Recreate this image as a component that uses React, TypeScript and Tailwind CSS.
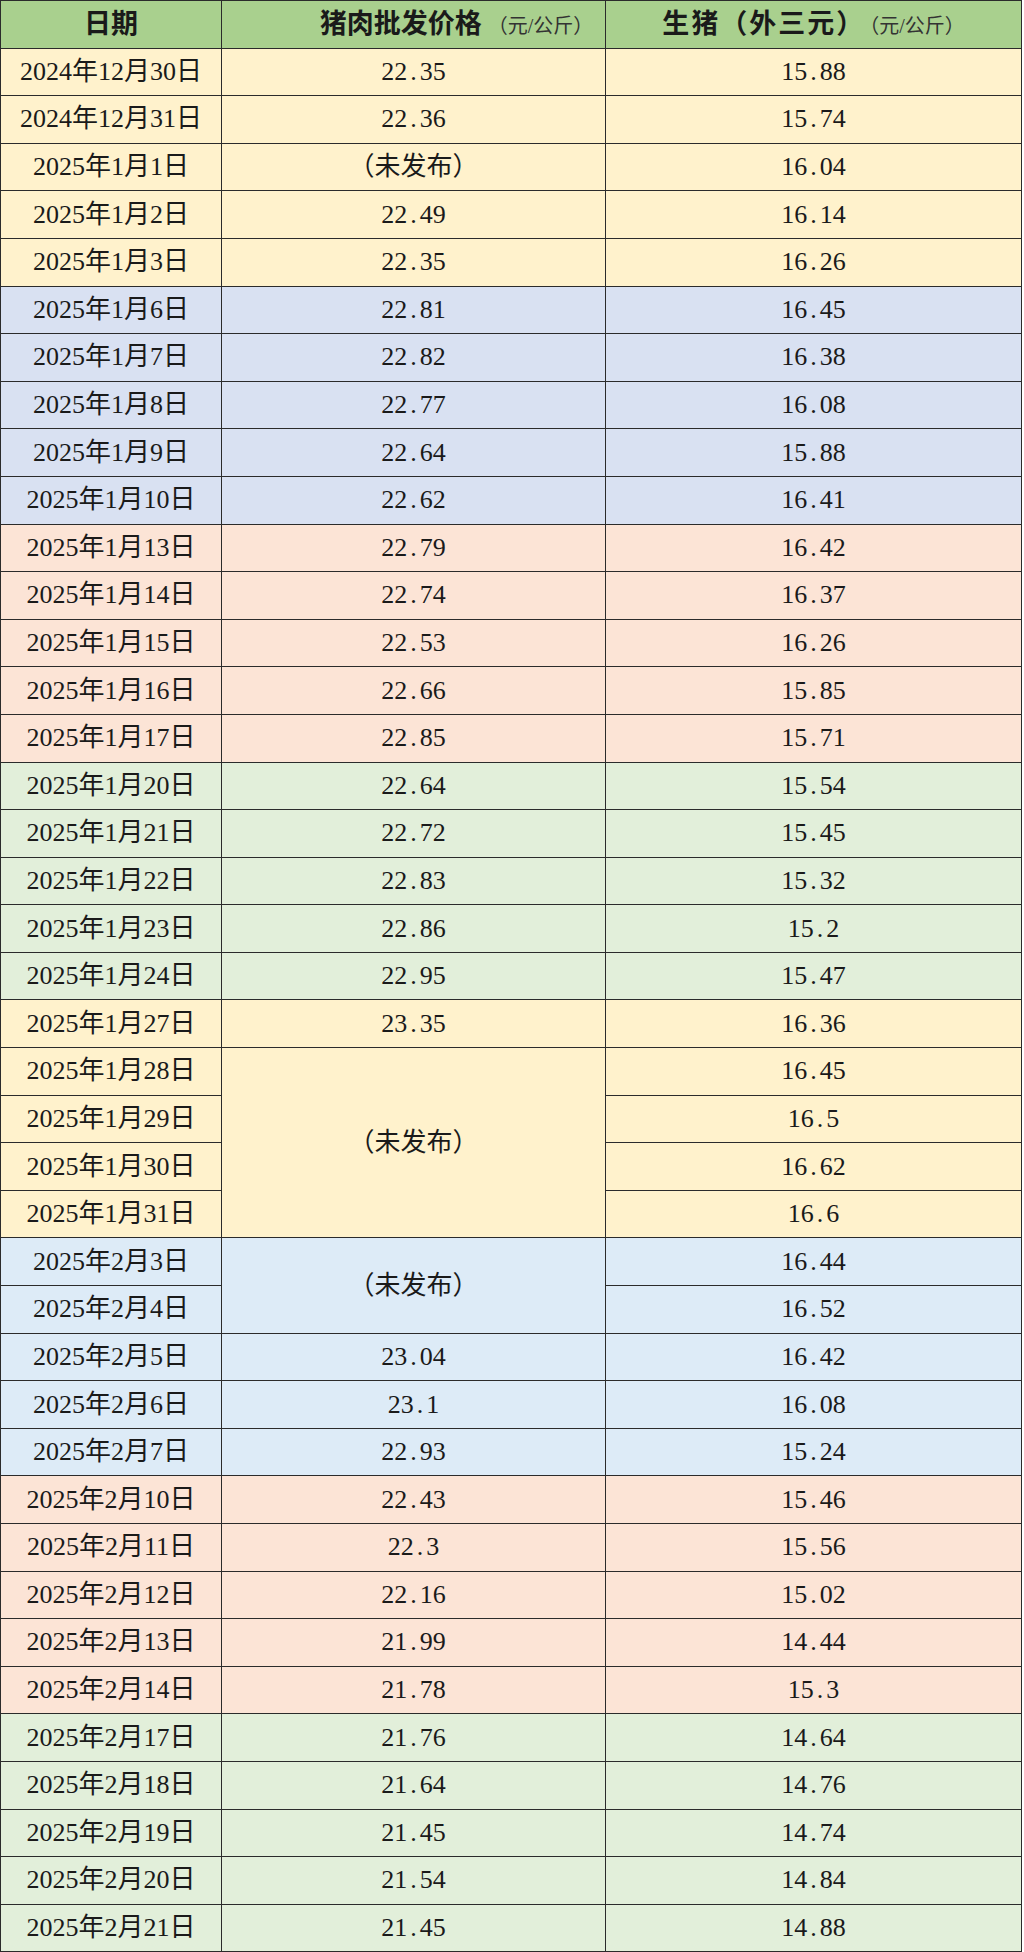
import React from 'react';

// --- Data ---
type Row = { date: string; pork: string | null; live: string; span?: number };
type Group = { bg: string; rows: Row[] };

const NA = '（未发布）';

const groups: Group[] = [
  {
    bg: 'bg-[#fff2cc]',
    rows: [
      { date: '2024年12月30日', pork: '22.35', live: '15.88' },
      { date: '2024年12月31日', pork: '22.36', live: '15.74' },
      { date: '2025年1月1日', pork: NA, live: '16.04' },
      { date: '2025年1月2日', pork: '22.49', live: '16.14' },
      { date: '2025年1月3日', pork: '22.35', live: '16.26' },
    ],
  },
  {
    bg: 'bg-[#d9e1f2]',
    rows: [
      { date: '2025年1月6日', pork: '22.81', live: '16.45' },
      { date: '2025年1月7日', pork: '22.82', live: '16.38' },
      { date: '2025年1月8日', pork: '22.77', live: '16.08' },
      { date: '2025年1月9日', pork: '22.64', live: '15.88' },
      { date: '2025年1月10日', pork: '22.62', live: '16.41' },
    ],
  },
  {
    bg: 'bg-[#fce4d6]',
    rows: [
      { date: '2025年1月13日', pork: '22.79', live: '16.42' },
      { date: '2025年1月14日', pork: '22.74', live: '16.37' },
      { date: '2025年1月15日', pork: '22.53', live: '16.26' },
      { date: '2025年1月16日', pork: '22.66', live: '15.85' },
      { date: '2025年1月17日', pork: '22.85', live: '15.71' },
    ],
  },
  {
    bg: 'bg-[#e2efda]',
    rows: [
      { date: '2025年1月20日', pork: '22.64', live: '15.54' },
      { date: '2025年1月21日', pork: '22.72', live: '15.45' },
      { date: '2025年1月22日', pork: '22.83', live: '15.32' },
      { date: '2025年1月23日', pork: '22.86', live: '15.2' },
      { date: '2025年1月24日', pork: '22.95', live: '15.47' },
    ],
  },
  {
    bg: 'bg-[#fff2cc]',
    rows: [
      { date: '2025年1月27日', pork: '23.35', live: '16.36' },
      { date: '2025年1月28日', pork: NA, live: '16.45', span: 4 },
      { date: '2025年1月29日', pork: null, live: '16.5' },
      { date: '2025年1月30日', pork: null, live: '16.62' },
      { date: '2025年1月31日', pork: null, live: '16.6' },
    ],
  },
  {
    bg: 'bg-[#ddebf7]',
    rows: [
      { date: '2025年2月3日', pork: NA, live: '16.44', span: 2 },
      { date: '2025年2月4日', pork: null, live: '16.52' },
      { date: '2025年2月5日', pork: '23.04', live: '16.42' },
      { date: '2025年2月6日', pork: '23.1', live: '16.08' },
      { date: '2025年2月7日', pork: '22.93', live: '15.24' },
    ],
  },
  {
    bg: 'bg-[#fce4d6]',
    rows: [
      { date: '2025年2月10日', pork: '22.43', live: '15.46' },
      { date: '2025年2月11日', pork: '22.3', live: '15.56' },
      { date: '2025年2月12日', pork: '22.16', live: '15.02' },
      { date: '2025年2月13日', pork: '21.99', live: '14.44' },
      { date: '2025年2月14日', pork: '21.78', live: '15.3' },
    ],
  },
  {
    bg: 'bg-[#e2efda]',
    rows: [
      { date: '2025年2月17日', pork: '21.76', live: '14.64' },
      { date: '2025年2月18日', pork: '21.64', live: '14.76' },
      { date: '2025年2月19日', pork: '21.45', live: '14.74' },
      { date: '2025年2月20日', pork: '21.54', live: '14.84' },
      { date: '2025年2月21日', pork: '21.45', live: '14.88' },
    ],
  },
];

// Song-style fonts give the period a half-width box
function Num({ v }: { v: string }) {
  if (!v.includes('.')) return <>{v}</>;
  const [a, b] = v.split('.');
  return (
    <>
      {a}
      <span className="mx-[3px]">.</span>
      {b}
    </>
  );
}

const cell = 'border border-[#2b2b2b] text-center align-middle p-0';

export default function App() {
  return (
    <div
      className="bg-white w-[1024px] h-[1952px] text-[#1a1a1a]"
      style={{ fontFamily: '"Liberation Serif", "Noto Sans CJK SC", serif' }}
    >
      <table className="border-collapse table-fixed w-[1021px]">
        <colgroup>
          <col className="w-[221px]" />
          <col className="w-[384px]" />
          <col className="w-[416px]" />
        </colgroup>
        <thead>
          <tr className="h-[47.6px] bg-[#a9d08e]">
            <th className={`${cell} text-[27px] font-bold`}>日期</th>
            <th className={`${cell} pl-[86px] font-bold whitespace-nowrap`}>
              <span className="text-[27px]">猪肉批发价格</span>
              <span className="ml-[6px] text-[20px] font-normal text-[#333]">（元/公斤）</span>
            </th>
            <th className={`${cell} font-bold whitespace-nowrap`}>
              <span className="text-[27px] tracking-[2px]">生猪（外三元）</span>
              <span className="ml-[4px] text-[20px] font-normal text-[#333]">（元/公斤）</span>
            </th>
          </tr>
        </thead>
        <tbody className="text-[26px] leading-none">
          {groups.map((g) =>
            g.rows.map((r) => (
              <tr key={r.date} className={`h-[47.6px] ${g.bg}`}>
                <td className={cell}>{r.date}</td>
                {r.pork !== null && (
                  <td className={cell} rowSpan={r.span ?? 1}>
                    <Num v={r.pork} />
                  </td>
                )}
                <td className={cell}>
                  <Num v={r.live} />
                </td>
              </tr>
            ))
          )}
        </tbody>
      </table>
    </div>
  );
}
